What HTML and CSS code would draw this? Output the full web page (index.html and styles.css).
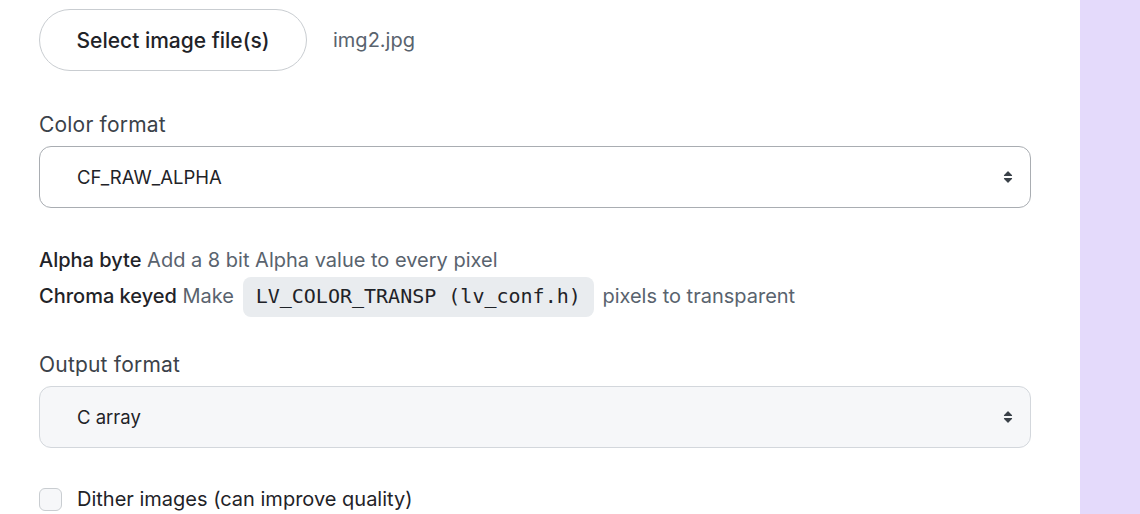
FILE: index.html
```html
<!DOCTYPE html>
<html lang="en">
<head>
<meta charset="utf-8">
<title>Image converter</title>
<link rel="stylesheet" href="styles.css">
</head>
<body>
<div class="page">
  <main class="main">
    <div class="file-row">
      <button class="file-btn" type="button">Select image file(s)</button>
      <span class="file-name">img2.jpg</span>
    </div>

    <div class="field">
      <label class="label">Color format</label>
      <div class="select select-white">
        <span>CF_RAW_ALPHA</span>
        <svg class="chev" width="10" height="14" viewBox="0 0 10 14"><path d="M1.5 5.5 L5 1.8 L8.5 5.5 Z M1.5 8.5 L5 12.2 L8.5 8.5 Z" fill="#3b4249" stroke="#3b4249" stroke-width="1.2" stroke-linejoin="round"/></svg>
      </div>
    </div>

    <div class="help">
      <div class="help-line"><b>Alpha byte</b> Add a 8 bit Alpha value to every pixel</div>
      <div class="help-line"><b>Chroma keyed</b> Make <code class="chip">LV_COLOR_TRANSP (lv_conf.h)</code> pixels to transparent</div>
    </div>

    <div class="field field-out">
      <label class="label">Output format</label>
      <div class="select select-grey">
        <span>C array</span>
        <svg class="chev" width="10" height="14" viewBox="0 0 10 14"><path d="M1.5 5.5 L5 1.8 L8.5 5.5 Z M1.5 8.5 L5 12.2 L8.5 8.5 Z" fill="#3b4249" stroke="#3b4249" stroke-width="1.2" stroke-linejoin="round"/></svg>
      </div>
    </div>

    <label class="check">
      <span class="box"></span>
      <span>Dither images (can improve quality)</span>
    </label>
  </main>
  <aside class="side"></aside>
</div>
</body>
</html>
```

FILE: styles.css
```css
html, body {
  margin: 0;
  padding: 0;
  height: 100%;
  background: #ffffff;
  overflow: hidden;
}

body {
  font-family: Inter, "Liberation Sans", sans-serif;
  font-size: 20px;
  color: #1f2328;
}

.page {
  display: flex;
  height: 514px;
}

.main {
  width: 992px;
  padding: 9px 0 0 39px;
  display: flex;
  flex-direction: column;
}

.side {
  margin-left: 49px;
  flex: 1;
  background: #e4dafb;
}

.file-row {
  display: flex;
  align-items: center;
  gap: 26px;
}

.file-btn {
  font-family: inherit;
  font-size: 21px;
  font-weight: 500;
  color: #1f2328;
  background: #ffffff;
  border: 1px solid #c9cdd1;
  border-radius: 31px;
  height: 62px;
  width: 268px;
  padding: 0;
}

.file-name {
  color: #59636e;
}

.field {
  margin-top: 40px;
  display: flex;
  flex-direction: column;
}

.label {
  font-size: 21px;
  letter-spacing: 0.2px;
  color: #3b4249;
  line-height: 27px;
  margin-bottom: 8px;
}

.select {
  height: 62px;
  box-sizing: border-box;
  border-radius: 12px;
  display: flex;
  align-items: center;
  justify-content: space-between;
  padding: 0 17px 0 37px;
  font-size: 18.5px;
  color: #1f2328;
}

.select-white {
  background: #ffffff;
  border: 1px solid #a9adb2;
}

.select-grey {
  background: #f6f7f9;
  border: 1px solid #d3d7dc;
}

.chev {
  display: block;
}

.help {
  margin-top: 34px;
  color: #59636e;
}

.help-line {
  line-height: 36px;
}

.help b {
  font-weight: 500;
  color: #1f2328;
}

.chip {
  font-family: "DejaVu Sans Mono", monospace;
  font-size: 20px;
  color: #1f2328;
  background: #e9ecef;
  border-radius: 8px;
  padding: 7px 13px 9px;
  margin: 0 3px;
}

.field-out {
  margin-top: 37px;
}

.check {
  margin-top: 38px;
  display: flex;
  align-items: center;
  gap: 15px;
  color: #1f2328;
  line-height: 27px;
}

.box {
  width: 23px;
  height: 23px;
  box-sizing: border-box;
  border: 1px solid #c9cdd1;
  border-radius: 6px;
  background: #f6f7f9;
}
```
